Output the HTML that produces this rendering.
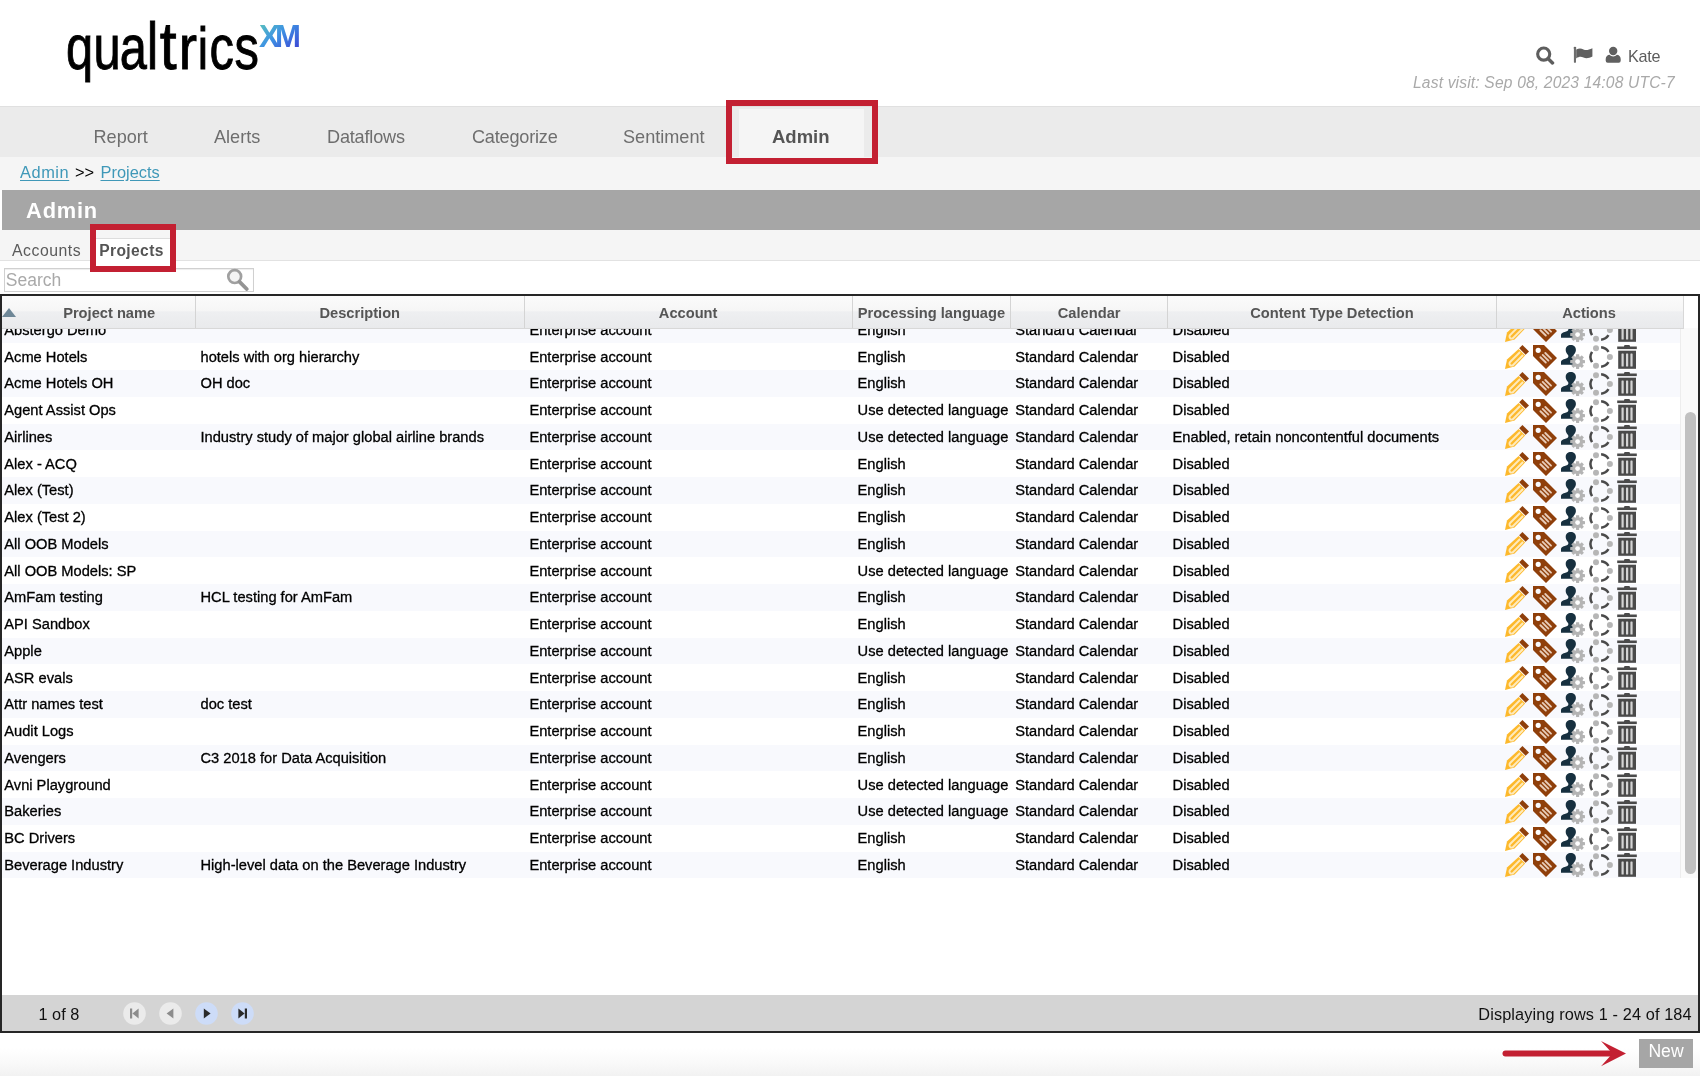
<!DOCTYPE html>
<html lang="en"><head><meta charset="utf-8"><title>Admin - Projects</title>
<style>
*{box-sizing:border-box}
html,body{margin:0;padding:0}
body{will-change:transform;width:1700px;height:1076px;overflow:hidden;background:#fff;position:relative;font-family:"Liberation Sans",sans-serif;color:#000}
.abs{position:absolute}
#logo{position:absolute;left:0;top:0;width:320px;height:100px}
#hdr-icons svg{position:absolute}
#kate{position:absolute;left:1628px;top:46.2px;font-size:16.2px;line-height:20px;color:#5c5c5c;letter-spacing:-.3px}
#lastvisit{position:absolute;left:1413px;top:73.4px;letter-spacing:.17px;width:262px;font-size:15.6px;line-height:20px;font-style:italic;color:#a9a9a9;white-space:nowrap}
#nav{position:absolute;left:0;top:106px;width:1700px;height:50.5px;background:#ebebeb;border-top:1.5px solid #e0e0e0}
#nav .t{position:absolute;top:19.1px;font-size:18.1px;line-height:22px;color:#6e6e6e;white-space:nowrap}
#nav .act{position:absolute;left:739px;top:2px;width:124.5px;height:49px;background:#f5f5f5}
#nav .t.b{font-weight:bold;color:#555;font-size:18.5px}
#crumb{position:absolute;left:0;top:156.5px;width:1700px;height:33.5px;background:#f5f5f5;font-size:16.4px;line-height:20px}
#crumb span,#crumb a{position:absolute;top:5.5px;white-space:nowrap}
#crumb a{color:#3f98b8;text-decoration:underline;text-underline-offset:2px}
#title{position:absolute;left:1.5px;top:190px;width:1698.5px;height:40px;background:#a6a6a6}
#title span{position:absolute;left:24.6px;top:8.3px;font-size:21.8px;line-height:25px;font-weight:bold;color:#fff;letter-spacing:.8px}
#tabs{position:absolute;left:0;top:230px;width:1700px;height:31px;background:#f5f5f5;border-bottom:1px solid #e2e2e2}
#tabs .a{position:absolute;left:12px;top:10.7px;font-size:15.8px;line-height:20px;color:#5a5a5a;letter-spacing:.52px}
#tabs .p{position:absolute;left:93px;top:8px;width:78px;height:23px;background:#fff;border-top:1px solid #ddd}
#tabs .p span{position:absolute;left:6.3px;top:1.5px;font-size:15.6px;line-height:20px;font-weight:bold;color:#555;letter-spacing:.36px}
.redbox{position:absolute;border:6px solid #c32032}
#search{position:absolute;left:3.8px;top:268px;width:250.2px;height:24px;border:1px solid #d0d0d0;background:#fff;box-shadow:inset 0 1px 1px #eee}
#search span{position:absolute;left:1px;top:0px;font-size:17.5px;line-height:22px;color:#a9a9a9}
#search svg{position:absolute;left:220px;top:-2px}
#grid{position:absolute;left:0;top:294px;width:1700px;height:739px;border:2px solid #262626;background:#fff;overflow:hidden}
#ghead{position:absolute;z-index:3;left:0;top:0;width:1682px;height:32.8px;background:linear-gradient(#fbfbfb 0%,#f6f6f6 45%,#eeeff1 50%,#e9eaec 100%);border-bottom:1px solid #d8d8d8;border-right:1px solid #d8d8d8}
.hc{position:absolute;top:0;height:31.8px;text-align:center;font-weight:bold;font-size:14.667px;line-height:34.8px;color:#555;white-space:nowrap;border-left:1px solid #d4d4d4}
.hc.first{border-left:none;padding-left:21.8px}
.sort{position:absolute;left:.9px;top:11.5px;width:0;height:0;border-left:7px solid transparent;border-right:7px solid transparent;border-bottom:9.8px solid #6e8797}
#gbody{position:absolute;left:0;top:32px;width:1696px;height:667px;overflow:hidden}
#gscroll{position:absolute;left:0;top:0;width:1678px;height:667px}
.r{position:absolute;left:0;width:1678px;height:26.75px;font-size:14.667px;line-height:26.75px;white-space:nowrap}
.r.s{background:#f8f9fd}
.c{position:absolute;top:.35px;-webkit-text-stroke:.3px #000;height:26.75px}
.c1{left:2.3px}.c2{left:198.5px}.c3{left:527.4px}.c4{left:855.6px}.c5{left:1013.2px}.c6{left:1170.6px}.c7{left:1503px;top:0}
.ic{position:absolute;top:1.9px;width:24px;height:24px}
.ic:nth-child(1){left:0}.ic:nth-child(2){left:28px}.ic:nth-child(3){left:56px}.ic:nth-child(4){left:84px}.ic:nth-child(5){left:112px}
#sbar{position:absolute;left:1678px;top:0;width:18px;height:550px;background:#fafafa;border-left:1px solid #ededed}
#thumb{position:absolute;left:4.3px;top:83.8px;width:10.5px;height:462px;border-radius:6px;background:#c1c1c1}
#pager{position:absolute;left:0;top:699px;width:1696px;height:36px;background:#d4d4d4}
#pager .l{position:absolute;left:36.5px;top:8.5px;font-size:16.3px;line-height:20px;color:#111}
#pager .rt{position:absolute;right:6.3px;top:8.5px;font-size:16.3px;line-height:20px;color:#111;white-space:nowrap;letter-spacing:.12px}
#pager svg{position:absolute;top:6.5px}
#bottom{position:absolute;left:0;top:1033px;width:1700px;height:43px;background:linear-gradient(#fff 0%,#fff 35%,#f9f9f9 70%,#f2f2f2 100%)}
#new{position:absolute;left:1639px;top:6.4px;width:54px;height:28.5px;background:#a6a6a6;color:#fff;font-size:17.6px;line-height:25.4px;text-align:center;padding-top:0}

</style></head>
<body>
<svg width="0" height="0" style="position:absolute"><defs>
<linearGradient id="xmg" x1="0" y1="0" x2="1" y2="1"><stop offset="0" stop-color="#5fcab6"/><stop offset=".45" stop-color="#3e93e3"/><stop offset="1" stop-color="#3b34d2"/></linearGradient>
<symbol id="i-edit" viewBox="0 0 24 24">
<polygon points="17.4,0 24,6.4 20.6,9.8 14.2,3.3" fill="#8f3f0a"/>
<polygon points="13.6,3.9 20.1,10.4 9.6,21.4 0,24 2,14.6" fill="#fdb92c"/>
<path d="M15.1,7 L5.1,17 A2.1,2.1 0 0 0 8.1,20 L18.1,10" fill="none" stroke="#feeabc" stroke-width="1.9"/>
</symbol>
<symbol id="i-tag" viewBox="0 0 24 24">
<path d="M0,0 L11,0 L24,13 L13,24 L0,11 Z M5.2,2.7 A2.6,2.6 0 1 0 5.2,7.9 A2.6,2.6 0 1 0 5.2,2.7 Z" fill="#8f3f0a" fill-rule="evenodd"/>
<g stroke="#e8ccb8" stroke-width="1.9" stroke-linecap="round"><path d="M12.3,8 L18,13.7"/><path d="M9.7,9.9 L15.4,15.6"/><path d="M7.4,12.2 L12.8,17.5"/></g>
</symbol>
<symbol id="i-user" viewBox="0 0 24 24">
<path d="M0,19.8 L0,17.2 C0,14.9 2.6,14.3 6.4,12.9 C7.6,12.3 7.6,11 7,10 C5.5,8.5 4.7,6.5 4.7,5 C4.7,1.6 6.9,0 9.8,0 C12.7,0 14.9,1.6 14.9,5 C14.9,6.5 14.1,8.5 12.6,10 C12.2,11 12.3,12.2 13.3,12.9 L15,13.6 L15,19.8 Z" fill="#17303f"/>
<g transform="translate(16.6,16.6)" fill="#b4b4b4">
<circle r="5.6"/>
<rect x="-1.6" y="-7.4" width="3.2" height="14.8" rx=".4"/><rect x="-1.6" y="-7.4" width="3.2" height="14.8" rx=".4" transform="rotate(45)"/><rect x="-1.6" y="-7.4" width="3.2" height="14.8" rx=".4" transform="rotate(90)"/><rect x="-1.6" y="-7.4" width="3.2" height="14.8" rx=".4" transform="rotate(135)"/>
<circle r="2.4" fill="#fff"/>
</g>
</symbol>
<symbol id="i-circ" viewBox="0 0 24 24">
<g fill="none" stroke="#4a4a4a" stroke-width="2.5">
<path d="M12.10,2.34 A9.7,9.7 0 0 1 19.48,6.86"/>
<path d="M19.48,17.14 A9.7,9.7 0 0 1 12.10,21.66"/>
<path d="M3.02,17.14 A9.7,9.7 0 0 1 3.02,6.86"/>
</g>
<g fill="#b6b6b6"><circle cx="7" cy="3.3" r="3"/><circle cx="20.9" cy="12" r="3"/><circle cx="7" cy="20.7" r="3"/></g>
</symbol>
<symbol id="i-trash" viewBox="0 0 24 24">
<g fill="#4a4a4a"><rect x="7" y="0" width="6" height="2.5" rx="1.2"/><rect x="0.2" y="1.5" width="19.6" height="2.6"/><rect x="1.2" y="5.7" width="17.8" height="18.1"/></g>
<g fill="#d4d4d4"><rect x="4.5" y="8.5" width="2.2" height="13" rx=".6"/><rect x="9" y="8.5" width="2.2" height="13" rx=".6"/><rect x="13.4" y="8.5" width="2.2" height="13" rx=".6"/></g>
</symbol>
</defs></svg>
<svg id="logo" viewBox="0 0 320 100" role="img" aria-label="qualtrics XM"><title>qualtrics XM</title>
<g transform="scale(0.775,1)"><text y="69.3" x="85.3 120.5 154.4 189.3 206.2 230.5 255.1 270.3 302.6" font-family="'Liberation Sans',sans-serif" font-size="63" fill="#000" stroke="#000" stroke-width="0.9"><tspan>qua</tspan><tspan font-size="67">l</tspan><tspan font-size="66" textLength="21.8" lengthAdjust="spacingAndGlyphs">t</tspan><tspan textLength="23.6" lengthAdjust="spacingAndGlyphs">r</tspan><tspan font-size="60">i</tspan><tspan>cs</tspan></text></g>
<text y="46.6" x="259.1 274.9" font-family="'Liberation Sans',sans-serif" font-weight="bold" font-size="31.1" fill="url(#xmg)">XM</text>
</svg>
<div id="hdr-icons">
<svg style="left:1535px;top:46px" width="20" height="19" viewBox="0 0 20 19"><circle cx="8.7" cy="8.1" r="6.05" fill="none" stroke="#5e5e5e" stroke-width="3.1"/><path d="M13.2,12.8 L17.5,16.9" stroke="#5e5e5e" stroke-width="3.5" stroke-linecap="round"/></svg>
<svg style="left:1573px;top:46px" width="21" height="18" viewBox="0 0 21 18"><circle cx="1.95" cy="2.1" r="1.35" fill="#666"/><rect x=".9" y="2" width="2.1" height="14.8" rx=".9" fill="#6e6e6e"/><path d="M3.2,3.6 C6,2 8,2.2 10.5,3.4 C13,4.6 15.5,4 19.4,2.2 L19.4,10.6 C16,12.4 13,12.8 10.5,11.6 C8,10.4 6,10.6 3.2,12.4 Z" fill="#606060"/></svg>
<svg style="left:1604.8px;top:46px" width="17" height="18" viewBox="0 0 17 18"><circle cx="8.2" cy="5" r="4.2" fill="#606060"/><path d="M0.7,14.8 V12.9 C0.7,10.3 2.6,8.9 4.6,8.7 C5.6,9.8 6.8,10.4 8.2,10.4 C9.6,10.4 10.8,9.8 11.8,8.7 C13.8,8.9 15.7,10.3 15.7,12.9 V14.8 A2,2 0 0 1 13.7,16.8 H2.7 A2,2 0 0 1 0.7,14.8 Z" fill="#606060"/></svg>
</div>
<div id="kate">Kate</div>
<div id="lastvisit">Last visit: Sep 08, 2023 14:08 UTC-7</div>
<div id="nav">
<div class="act"></div>
<span class="t" style="left:93.5px">Report</span>
<span class="t" style="left:214px">Alerts</span>
<span class="t" style="left:327px;letter-spacing:-.18px">Dataflows</span>
<span class="t" style="left:472px;letter-spacing:-.2px">Categorize</span>
<span class="t" style="left:623px">Sentiment</span>
<span class="t b" style="left:772px">Admin</span>
</div>
<div id="crumb"><a style="left:20px;letter-spacing:.55px">Admin</a><span style="left:75px">&gt;&gt;</span><a style="left:100.5px">Projects</a></div>
<div id="title"><span>Admin</span></div>
<div id="tabs"><span class="a">Accounts</span><div class="p"><span>Projects</span></div></div>
<div class="redbox" style="left:726px;top:100px;width:152px;height:64px"></div>
<div id="search"><span>Search</span><svg width="26" height="24" viewBox="0 0 26 24"><circle cx="9.7" cy="9.6" r="6.4" fill="#f4f4f4" stroke="#a0a0a0" stroke-width="2.7"/><path d="M14.6,14.8 L21.7,22" stroke="#949494" stroke-width="3.8" stroke-linecap="round"/></svg></div>
<div id="grid">
<div id="ghead"><div class="hc first" style="left:-0.5px;width:193.5px"><span class="sort"></span><span>Project name</span></div><div class="hc" style="left:193.0px;width:328.5px"><span>Description</span></div><div class="hc" style="left:521.5px;width:328.3px"><span>Account</span></div><div class="hc" style="left:849.8px;width:158.2px"><span>Processing language</span></div><div class="hc" style="left:1008.0px;width:157.3px"><span>Calendar</span></div><div class="hc" style="left:1165.3px;width:328.3px"><span>Content Type Detection</span></div><div class="hc" style="left:1493.6px;width:185.9px"><span>Actions</span></div></div>
<div id="gbody"><div id="gscroll">
<div class="r s" style="top:-11.45px"><span class="c c1">Abstergo Demo</span><span class="c c2"></span><span class="c c3">Enterprise account</span><span class="c c4">English</span><span class="c c5">Standard Calendar</span><span class="c c6">Disabled</span><span class="c c7"><svg class="ic" viewBox="0 0 24 24"><use href="#i-edit"/></svg><svg class="ic" viewBox="0 0 24 24"><use href="#i-tag"/></svg><svg class="ic" viewBox="0 0 24 24"><use href="#i-user"/></svg><svg class="ic" viewBox="0 0 24 24"><use href="#i-circ"/></svg><svg class="ic" viewBox="0 0 24 24"><use href="#i-trash"/></svg></span></div>
<div class="r" style="top:15.30px"><span class="c c1">Acme Hotels</span><span class="c c2">hotels with org hierarchy</span><span class="c c3">Enterprise account</span><span class="c c4">English</span><span class="c c5">Standard Calendar</span><span class="c c6">Disabled</span><span class="c c7"><svg class="ic" viewBox="0 0 24 24"><use href="#i-edit"/></svg><svg class="ic" viewBox="0 0 24 24"><use href="#i-tag"/></svg><svg class="ic" viewBox="0 0 24 24"><use href="#i-user"/></svg><svg class="ic" viewBox="0 0 24 24"><use href="#i-circ"/></svg><svg class="ic" viewBox="0 0 24 24"><use href="#i-trash"/></svg></span></div>
<div class="r s" style="top:42.05px"><span class="c c1">Acme Hotels OH</span><span class="c c2">OH doc</span><span class="c c3">Enterprise account</span><span class="c c4">English</span><span class="c c5">Standard Calendar</span><span class="c c6">Disabled</span><span class="c c7"><svg class="ic" viewBox="0 0 24 24"><use href="#i-edit"/></svg><svg class="ic" viewBox="0 0 24 24"><use href="#i-tag"/></svg><svg class="ic" viewBox="0 0 24 24"><use href="#i-user"/></svg><svg class="ic" viewBox="0 0 24 24"><use href="#i-circ"/></svg><svg class="ic" viewBox="0 0 24 24"><use href="#i-trash"/></svg></span></div>
<div class="r" style="top:68.80px"><span class="c c1">Agent Assist Ops</span><span class="c c2"></span><span class="c c3">Enterprise account</span><span class="c c4">Use detected language</span><span class="c c5">Standard Calendar</span><span class="c c6">Disabled</span><span class="c c7"><svg class="ic" viewBox="0 0 24 24"><use href="#i-edit"/></svg><svg class="ic" viewBox="0 0 24 24"><use href="#i-tag"/></svg><svg class="ic" viewBox="0 0 24 24"><use href="#i-user"/></svg><svg class="ic" viewBox="0 0 24 24"><use href="#i-circ"/></svg><svg class="ic" viewBox="0 0 24 24"><use href="#i-trash"/></svg></span></div>
<div class="r s" style="top:95.55px"><span class="c c1">Airlines</span><span class="c c2">Industry study of major global airline brands</span><span class="c c3">Enterprise account</span><span class="c c4">Use detected language</span><span class="c c5">Standard Calendar</span><span class="c c6">Enabled, retain noncontentful documents</span><span class="c c7"><svg class="ic" viewBox="0 0 24 24"><use href="#i-edit"/></svg><svg class="ic" viewBox="0 0 24 24"><use href="#i-tag"/></svg><svg class="ic" viewBox="0 0 24 24"><use href="#i-user"/></svg><svg class="ic" viewBox="0 0 24 24"><use href="#i-circ"/></svg><svg class="ic" viewBox="0 0 24 24"><use href="#i-trash"/></svg></span></div>
<div class="r" style="top:122.30px"><span class="c c1">Alex - ACQ</span><span class="c c2"></span><span class="c c3">Enterprise account</span><span class="c c4">English</span><span class="c c5">Standard Calendar</span><span class="c c6">Disabled</span><span class="c c7"><svg class="ic" viewBox="0 0 24 24"><use href="#i-edit"/></svg><svg class="ic" viewBox="0 0 24 24"><use href="#i-tag"/></svg><svg class="ic" viewBox="0 0 24 24"><use href="#i-user"/></svg><svg class="ic" viewBox="0 0 24 24"><use href="#i-circ"/></svg><svg class="ic" viewBox="0 0 24 24"><use href="#i-trash"/></svg></span></div>
<div class="r s" style="top:149.05px"><span class="c c1">Alex (Test)</span><span class="c c2"></span><span class="c c3">Enterprise account</span><span class="c c4">English</span><span class="c c5">Standard Calendar</span><span class="c c6">Disabled</span><span class="c c7"><svg class="ic" viewBox="0 0 24 24"><use href="#i-edit"/></svg><svg class="ic" viewBox="0 0 24 24"><use href="#i-tag"/></svg><svg class="ic" viewBox="0 0 24 24"><use href="#i-user"/></svg><svg class="ic" viewBox="0 0 24 24"><use href="#i-circ"/></svg><svg class="ic" viewBox="0 0 24 24"><use href="#i-trash"/></svg></span></div>
<div class="r" style="top:175.80px"><span class="c c1">Alex (Test 2)</span><span class="c c2"></span><span class="c c3">Enterprise account</span><span class="c c4">English</span><span class="c c5">Standard Calendar</span><span class="c c6">Disabled</span><span class="c c7"><svg class="ic" viewBox="0 0 24 24"><use href="#i-edit"/></svg><svg class="ic" viewBox="0 0 24 24"><use href="#i-tag"/></svg><svg class="ic" viewBox="0 0 24 24"><use href="#i-user"/></svg><svg class="ic" viewBox="0 0 24 24"><use href="#i-circ"/></svg><svg class="ic" viewBox="0 0 24 24"><use href="#i-trash"/></svg></span></div>
<div class="r s" style="top:202.55px"><span class="c c1">All OOB Models</span><span class="c c2"></span><span class="c c3">Enterprise account</span><span class="c c4">English</span><span class="c c5">Standard Calendar</span><span class="c c6">Disabled</span><span class="c c7"><svg class="ic" viewBox="0 0 24 24"><use href="#i-edit"/></svg><svg class="ic" viewBox="0 0 24 24"><use href="#i-tag"/></svg><svg class="ic" viewBox="0 0 24 24"><use href="#i-user"/></svg><svg class="ic" viewBox="0 0 24 24"><use href="#i-circ"/></svg><svg class="ic" viewBox="0 0 24 24"><use href="#i-trash"/></svg></span></div>
<div class="r" style="top:229.30px"><span class="c c1">All OOB Models: SP</span><span class="c c2"></span><span class="c c3">Enterprise account</span><span class="c c4">Use detected language</span><span class="c c5">Standard Calendar</span><span class="c c6">Disabled</span><span class="c c7"><svg class="ic" viewBox="0 0 24 24"><use href="#i-edit"/></svg><svg class="ic" viewBox="0 0 24 24"><use href="#i-tag"/></svg><svg class="ic" viewBox="0 0 24 24"><use href="#i-user"/></svg><svg class="ic" viewBox="0 0 24 24"><use href="#i-circ"/></svg><svg class="ic" viewBox="0 0 24 24"><use href="#i-trash"/></svg></span></div>
<div class="r s" style="top:256.05px"><span class="c c1">AmFam testing</span><span class="c c2">HCL testing for AmFam</span><span class="c c3">Enterprise account</span><span class="c c4">English</span><span class="c c5">Standard Calendar</span><span class="c c6">Disabled</span><span class="c c7"><svg class="ic" viewBox="0 0 24 24"><use href="#i-edit"/></svg><svg class="ic" viewBox="0 0 24 24"><use href="#i-tag"/></svg><svg class="ic" viewBox="0 0 24 24"><use href="#i-user"/></svg><svg class="ic" viewBox="0 0 24 24"><use href="#i-circ"/></svg><svg class="ic" viewBox="0 0 24 24"><use href="#i-trash"/></svg></span></div>
<div class="r" style="top:282.80px"><span class="c c1">API Sandbox</span><span class="c c2"></span><span class="c c3">Enterprise account</span><span class="c c4">English</span><span class="c c5">Standard Calendar</span><span class="c c6">Disabled</span><span class="c c7"><svg class="ic" viewBox="0 0 24 24"><use href="#i-edit"/></svg><svg class="ic" viewBox="0 0 24 24"><use href="#i-tag"/></svg><svg class="ic" viewBox="0 0 24 24"><use href="#i-user"/></svg><svg class="ic" viewBox="0 0 24 24"><use href="#i-circ"/></svg><svg class="ic" viewBox="0 0 24 24"><use href="#i-trash"/></svg></span></div>
<div class="r s" style="top:309.55px"><span class="c c1">Apple</span><span class="c c2"></span><span class="c c3">Enterprise account</span><span class="c c4">Use detected language</span><span class="c c5">Standard Calendar</span><span class="c c6">Disabled</span><span class="c c7"><svg class="ic" viewBox="0 0 24 24"><use href="#i-edit"/></svg><svg class="ic" viewBox="0 0 24 24"><use href="#i-tag"/></svg><svg class="ic" viewBox="0 0 24 24"><use href="#i-user"/></svg><svg class="ic" viewBox="0 0 24 24"><use href="#i-circ"/></svg><svg class="ic" viewBox="0 0 24 24"><use href="#i-trash"/></svg></span></div>
<div class="r" style="top:336.30px"><span class="c c1">ASR evals</span><span class="c c2"></span><span class="c c3">Enterprise account</span><span class="c c4">English</span><span class="c c5">Standard Calendar</span><span class="c c6">Disabled</span><span class="c c7"><svg class="ic" viewBox="0 0 24 24"><use href="#i-edit"/></svg><svg class="ic" viewBox="0 0 24 24"><use href="#i-tag"/></svg><svg class="ic" viewBox="0 0 24 24"><use href="#i-user"/></svg><svg class="ic" viewBox="0 0 24 24"><use href="#i-circ"/></svg><svg class="ic" viewBox="0 0 24 24"><use href="#i-trash"/></svg></span></div>
<div class="r s" style="top:363.05px"><span class="c c1">Attr names test</span><span class="c c2">doc test</span><span class="c c3">Enterprise account</span><span class="c c4">English</span><span class="c c5">Standard Calendar</span><span class="c c6">Disabled</span><span class="c c7"><svg class="ic" viewBox="0 0 24 24"><use href="#i-edit"/></svg><svg class="ic" viewBox="0 0 24 24"><use href="#i-tag"/></svg><svg class="ic" viewBox="0 0 24 24"><use href="#i-user"/></svg><svg class="ic" viewBox="0 0 24 24"><use href="#i-circ"/></svg><svg class="ic" viewBox="0 0 24 24"><use href="#i-trash"/></svg></span></div>
<div class="r" style="top:389.80px"><span class="c c1">Audit Logs</span><span class="c c2"></span><span class="c c3">Enterprise account</span><span class="c c4">English</span><span class="c c5">Standard Calendar</span><span class="c c6">Disabled</span><span class="c c7"><svg class="ic" viewBox="0 0 24 24"><use href="#i-edit"/></svg><svg class="ic" viewBox="0 0 24 24"><use href="#i-tag"/></svg><svg class="ic" viewBox="0 0 24 24"><use href="#i-user"/></svg><svg class="ic" viewBox="0 0 24 24"><use href="#i-circ"/></svg><svg class="ic" viewBox="0 0 24 24"><use href="#i-trash"/></svg></span></div>
<div class="r s" style="top:416.55px"><span class="c c1">Avengers</span><span class="c c2">C3 2018 for Data Acquisition</span><span class="c c3">Enterprise account</span><span class="c c4">English</span><span class="c c5">Standard Calendar</span><span class="c c6">Disabled</span><span class="c c7"><svg class="ic" viewBox="0 0 24 24"><use href="#i-edit"/></svg><svg class="ic" viewBox="0 0 24 24"><use href="#i-tag"/></svg><svg class="ic" viewBox="0 0 24 24"><use href="#i-user"/></svg><svg class="ic" viewBox="0 0 24 24"><use href="#i-circ"/></svg><svg class="ic" viewBox="0 0 24 24"><use href="#i-trash"/></svg></span></div>
<div class="r" style="top:443.30px"><span class="c c1">Avni Playground</span><span class="c c2"></span><span class="c c3">Enterprise account</span><span class="c c4">Use detected language</span><span class="c c5">Standard Calendar</span><span class="c c6">Disabled</span><span class="c c7"><svg class="ic" viewBox="0 0 24 24"><use href="#i-edit"/></svg><svg class="ic" viewBox="0 0 24 24"><use href="#i-tag"/></svg><svg class="ic" viewBox="0 0 24 24"><use href="#i-user"/></svg><svg class="ic" viewBox="0 0 24 24"><use href="#i-circ"/></svg><svg class="ic" viewBox="0 0 24 24"><use href="#i-trash"/></svg></span></div>
<div class="r s" style="top:470.05px"><span class="c c1">Bakeries</span><span class="c c2"></span><span class="c c3">Enterprise account</span><span class="c c4">Use detected language</span><span class="c c5">Standard Calendar</span><span class="c c6">Disabled</span><span class="c c7"><svg class="ic" viewBox="0 0 24 24"><use href="#i-edit"/></svg><svg class="ic" viewBox="0 0 24 24"><use href="#i-tag"/></svg><svg class="ic" viewBox="0 0 24 24"><use href="#i-user"/></svg><svg class="ic" viewBox="0 0 24 24"><use href="#i-circ"/></svg><svg class="ic" viewBox="0 0 24 24"><use href="#i-trash"/></svg></span></div>
<div class="r" style="top:496.80px"><span class="c c1">BC Drivers</span><span class="c c2"></span><span class="c c3">Enterprise account</span><span class="c c4">English</span><span class="c c5">Standard Calendar</span><span class="c c6">Disabled</span><span class="c c7"><svg class="ic" viewBox="0 0 24 24"><use href="#i-edit"/></svg><svg class="ic" viewBox="0 0 24 24"><use href="#i-tag"/></svg><svg class="ic" viewBox="0 0 24 24"><use href="#i-user"/></svg><svg class="ic" viewBox="0 0 24 24"><use href="#i-circ"/></svg><svg class="ic" viewBox="0 0 24 24"><use href="#i-trash"/></svg></span></div>
<div class="r s" style="top:523.55px"><span class="c c1">Beverage Industry</span><span class="c c2">High-level data on the Beverage Industry</span><span class="c c3">Enterprise account</span><span class="c c4">English</span><span class="c c5">Standard Calendar</span><span class="c c6">Disabled</span><span class="c c7"><svg class="ic" viewBox="0 0 24 24"><use href="#i-edit"/></svg><svg class="ic" viewBox="0 0 24 24"><use href="#i-tag"/></svg><svg class="ic" viewBox="0 0 24 24"><use href="#i-user"/></svg><svg class="ic" viewBox="0 0 24 24"><use href="#i-circ"/></svg><svg class="ic" viewBox="0 0 24 24"><use href="#i-trash"/></svg></span></div>
</div><div id="sbar"><div id="thumb"></div></div></div>
<div id="pager"><span class="l">1 of 8</span>
<svg style="left:120.5px" width="23" height="23" viewBox="0 0 23 23"><circle cx="11.5" cy="11.5" r="11.3" fill="#ebebeb"/><rect x="7" y="6.5" width="2.2" height="10" fill="#8c8c8c"/><path d="M15.6,6.6 L15.6,16.4 L9.4,11.5 Z" fill="#8c8c8c"/></svg>
<svg style="left:157px" width="23" height="23" viewBox="0 0 23 23"><circle cx="11.5" cy="11.5" r="11.3" fill="#ebebeb"/><path d="M14.4,6.6 L14.4,16.4 L7.6,11.5 Z" fill="#8c8c8c"/></svg>
<svg style="left:193px" width="23" height="23" viewBox="0 0 23 23"><circle cx="11.5" cy="11.5" r="11.3" fill="#cddcf8"/><path d="M8.8,6.6 L8.8,16.4 L15.6,11.5 Z" fill="#2a2a2a"/></svg>
<svg style="left:229px" width="23" height="23" viewBox="0 0 23 23"><circle cx="11.5" cy="11.5" r="11.3" fill="#cddcf8"/><rect x="13.8" y="6.5" width="2.2" height="10" fill="#2a2a2a"/><path d="M7.4,6.6 L7.4,16.4 L13.6,11.5 Z" fill="#2a2a2a"/></svg>
<span class="rt">Displaying rows 1 - 24 of 184</span></div>
</div>
<div class="redbox" style="left:90px;top:224px;width:86px;height:48px"></div>
<div id="bottom">
<svg style="position:absolute;left:1498px;top:4px" width="132" height="34" viewBox="0 0 132 34"><path d="M7.5,16.6 L112,16.6" stroke="#c32032" stroke-width="6" stroke-linecap="round"/><path d="M128,16.6 L103,4 L114.5,16.6 L103,29.2 Z" fill="#c32032"/></svg>
<div id="new">New</div>
</div>
</body></html>
